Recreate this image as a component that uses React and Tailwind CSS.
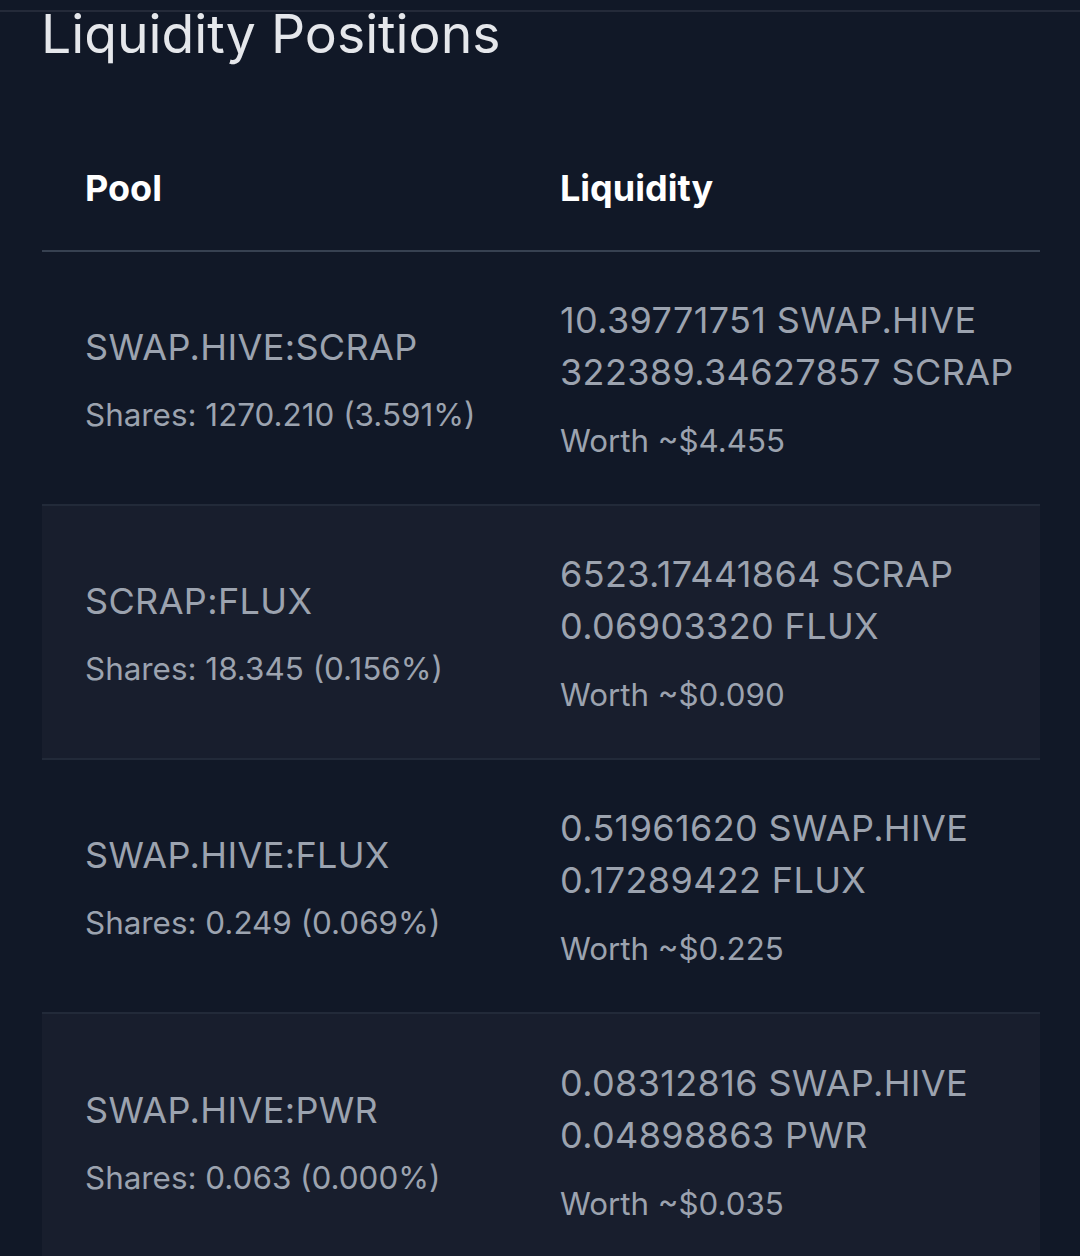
const positions = [
  {
    pool: "SWAP.HIVE:SCRAP",
    shares: "Shares: 1270.210 (3.591%)",
    base: "10.39771751 SWAP.HIVE",
    quote: "322389.34627857 SCRAP",
    worth: "Worth ~$4.455",
  },
  {
    pool: "SCRAP:FLUX",
    shares: "Shares: 18.345 (0.156%)",
    base: "6523.17441864 SCRAP",
    quote: "0.06903320 FLUX",
    worth: "Worth ~$0.090",
  },
  {
    pool: "SWAP.HIVE:FLUX",
    shares: "Shares: 0.249 (0.069%)",
    base: "0.51961620 SWAP.HIVE",
    quote: "0.17289422 FLUX",
    worth: "Worth ~$0.225",
  },
  {
    pool: "SWAP.HIVE:PWR",
    shares: "Shares: 0.063 (0.000%)",
    base: "0.08312816 SWAP.HIVE",
    quote: "0.04898863 PWR",
    worth: "Worth ~$0.035",
  },
];

function PositionRow({ p, striped }) {
  return (
    <div className={`flex h-[254px] items-center whitespace-nowrap ${striped ? "bg-[#181e2d]" : ""}`}>
      <div className="w-[476px] px-[43px]">
        <div className="text-[36px] leading-[52px] tracking-[0.01em] text-[#9ca3af]">{p.pool}</div>
        <div className="mt-[21px] text-[31.4px] leading-[42px] text-[#9ca3af]">{p.shares}</div>
      </div>
      <div className="flex-1 pl-[42px] pt-[5px]">
        <div className="text-[36px] leading-[52px] tracking-[0.01em] text-[#9ca3af]">{p.base}</div>
        <div className="text-[36px] leading-[52px] tracking-[0.01em] text-[#9ca3af]">{p.quote}</div>
        <div className="mt-[17px] text-[31.3px] leading-[52px] text-[#9ca3af]">{p.worth}</div>
      </div>
    </div>
  );
}

export default function App() {
  return (
    <div
      className="min-h-screen w-[1080px] overflow-hidden bg-[#111827]"
      style={{ fontFamily: "Inter, 'Noto Sans', sans-serif" }}
    >
      <div className="h-[12px] border-b-2 border-[#242a39]" />
      <h2 className="px-[41px] text-[53.5px] leading-[44px] text-[#e5e7eb]">Liquidity Positions</h2>

      <div className="ml-[42px] mr-[40px] mt-[73px]">
        <div className="flex border-b-2 border-[#374151] pt-[33px] pb-[36px]">
          <div className="w-[476px] px-[43px] text-[36px] font-bold leading-[52px] text-white">Pool</div>
          <div className="flex-1 px-[42px] text-[36px] font-bold leading-[52px] text-white">Liquidity</div>
        </div>
        <div className="divide-y-2 divide-[#222a39]">
          {positions.map((p, i) => (
            <PositionRow key={p.pool} p={p} striped={i % 2 === 1} />
          ))}
        </div>
      </div>
    </div>
  );
}
